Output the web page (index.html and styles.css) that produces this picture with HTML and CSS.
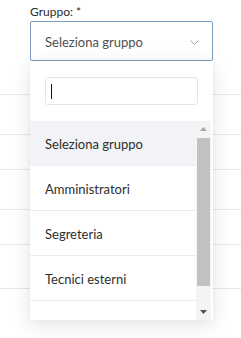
FILE: index.html
```html
<!DOCTYPE html>
<html lang="it">
<head>
<meta charset="utf-8">
<link rel="stylesheet" href="styles.css">
</head>
<body>
<div class="page">
  <div class="field">
    <label class="label">Gruppo: *</label>
    <div class="select">
      <span class="select-text">Seleziona gruppo</span>
      <svg class="chev" width="9" height="5" viewBox="0 0 9 5"><path d="M0.5 0.5 L4.5 4.5 L8.5 0.5" fill="none" stroke="#a0a0a0" stroke-width="1"/></svg>
    </div>
  </div>
  <div class="rows">
    <div class="row r1"></div>
    <div class="row r2"></div>
    <div class="row r3"></div>
    <div class="row r4"></div>
    <div class="row r5"></div>
    <div class="row r6"></div>
  </div>
  <div class="dropdown">
    <div class="search-wrap">
      <div class="search"><span class="caret"></span></div>
    </div>
    <div class="list">
      <ul class="options">
        <li class="opt active">Seleziona gruppo</li>
        <li class="opt">Amministratori</li>
        <li class="opt">Segreteria</li>
        <li class="opt">Tecnici esterni</li>
        <li class="opt"></li>
      </ul>
      <div class="scrollbar">
        <div class="sb-btn"><svg width="7" height="4" viewBox="0 0 7 4"><path d="M0 4 L3.5 0 L7 4 Z" fill="#a8a8a8"/></svg></div>
        <div class="sb-track"><div class="sb-thumb"></div></div>
        <div class="sb-btn"><svg width="7" height="4" viewBox="0 0 7 4"><path d="M0 0 L3.5 4 L7 0 Z" fill="#505050"/></svg></div>
      </div>
    </div>
  </div>
</div>
</body>
</html>
```
FILE: styles.css
```css
html, body {
  margin: 0;
  padding: 0;
  background: #fff;
}
body {
  font-family: Lato, "Open Sans", sans-serif;
  color: #333;
  width: 241px;
  height: 338px;
  overflow: hidden;
}
.page {
  position: relative;
  height: 338px;
}
.field {
  padding: 4px 0 0 30px;
  width: 183px;
}
.label {
  display: block;
  font-size: 12px;
  line-height: 16px;
  color: #2b2b2b;
  height: 17px;
}
.select {
  box-sizing: border-box;
  height: 40px;
  border: 1px solid #7d9ac0;
  border-radius: 2px;
  display: flex;
  align-items: center;
  justify-content: space-between;
  padding: 1px 13px 0 14px;
  background: #fff;
}
.select-text {
  font-size: 13px;
  color: #505050;
}
.chev {
  display: block;
  margin-top: 1px;
}
.rows {
  margin-top: 33px;
}
.row {
  border-top: 1px solid #e6e6e6;
  box-sizing: border-box;
}
.r1 { height: 40px; }
.r2 { height: 35px; }
.r3 { height: 40px; }
.r4 { height: 35px; }
.r5 { height: 44px; }
.r6 { height: 20px; }

.dropdown {
  position: absolute;
  top: 61px;
  left: 30px;
  width: 183px;
  height: 259px;
  background: #fff;
  box-shadow: 0 5px 20px rgba(0, 0, 0, 0.11), 0 0 4px rgba(0, 0, 0, 0.04);
  display: flex;
  flex-direction: column;
}
.search-wrap {
  padding: 16px 15px;
}
.search {
  box-sizing: border-box;
  height: 28px;
  border: 1px solid #e4e4e4;
  border-radius: 3px;
  display: flex;
  align-items: center;
  padding-left: 5px;
}
.caret {
  display: block;
  width: 1px;
  height: 15px;
  background: #111;
}
.list {
  position: relative;
  flex: 1;
  overflow: hidden;
}
.options {
  list-style: none;
  margin: 0;
  padding: 0;
  width: 166px;
}
.opt {
  box-sizing: border-box;
  height: 45px;
  border-bottom: 1px solid #ececec;
  padding: 2px 0 0 15px;
  display: flex;
  align-items: center;
  font-size: 13px;
  color: #2e2e2e;
}
.opt.active {
  background: #f2f3f7;
}
.scrollbar {
  position: absolute;
  top: 0;
  right: 2px;
  bottom: 0;
  width: 15px;
  background: #f4f4f4;
  display: flex;
  flex-direction: column;
}
.sb-btn {
  height: 16px;
  display: flex;
  align-items: center;
  justify-content: center;
}
.sb-track {
  flex: 1;
  padding: 0 1px;
}
.sb-thumb {
  margin-top: 1px;
  height: 148px;
  background: #c1c1c1;
}
```
